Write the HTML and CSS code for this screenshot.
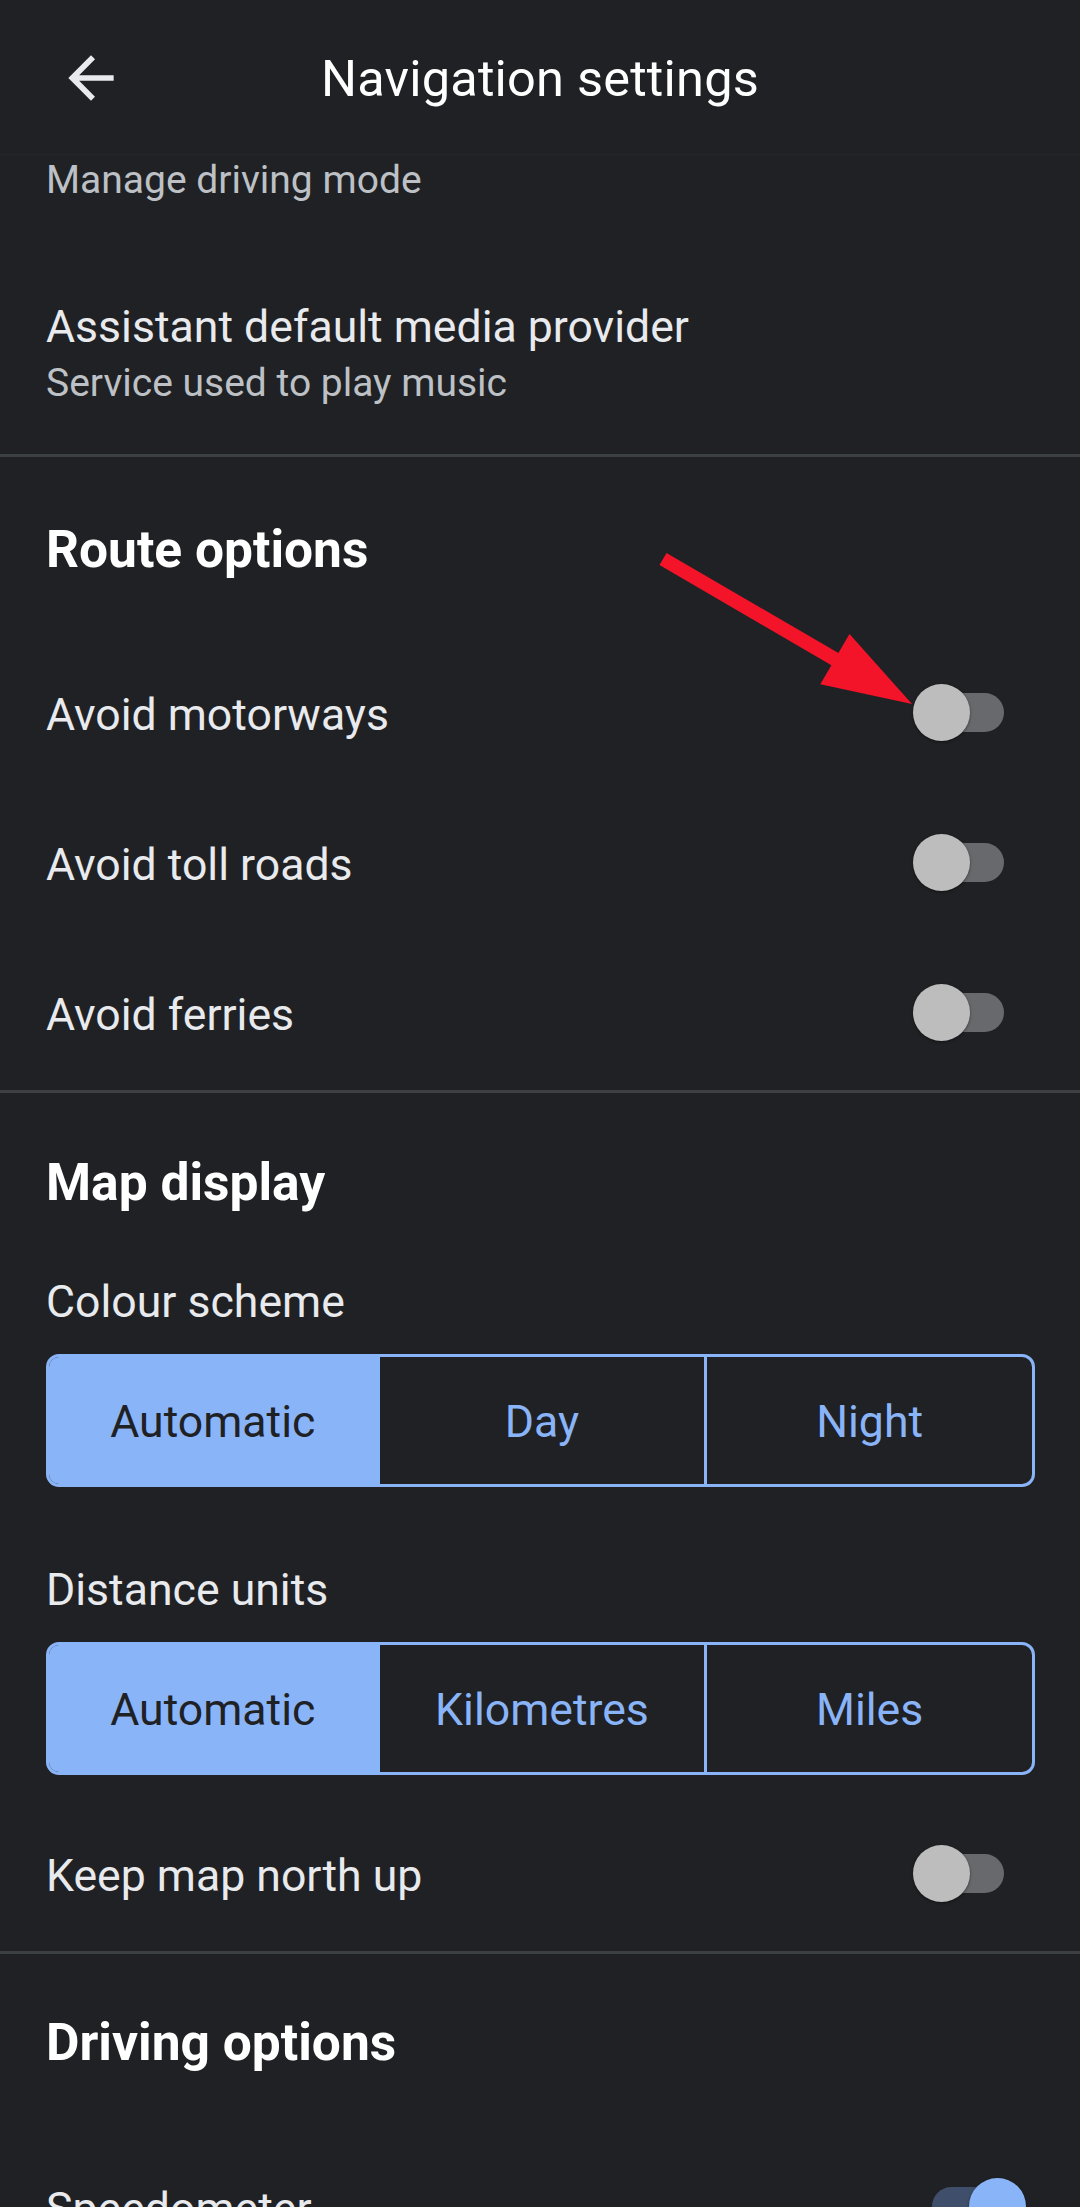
FILE: index.html
```html
<!DOCTYPE html>
<html lang="en">
<head>
<meta charset="utf-8">
<title>Navigation settings</title>
<link rel="stylesheet" href="styles.css">
</head>
<body>
<div class="screen">
  <header class="appbar">
    <button class="back" aria-label="Back">
      <svg viewBox="0 0 24 24" width="68" height="68"><path d="M20 11H7.83l5.59-5.59L12 4l-8 8 8 8 1.41-1.41L7.83 13H20v-2z" fill="#e8eaed"/></svg>
    </button>
    <h1 class="appbar-title">Navigation settings</h1>
    <span class="appbar-spacer"></span>
  </header>

  <main class="list">
    <div class="pref pref-partial">
      <p class="summary">Manage driving mode</p>
    </div>
    <div class="pref pref-two">
      <p class="title">Assistant default media provider</p>
      <p class="summary">Service used to play music</p>
    </div>

    <hr class="divider">

    <section class="group">
      <h2 class="group-title group-title-first">Route options</h2>
      <div class="pref switch-row">
        <span class="title">Avoid motorways</span>
        <span class="switch"><span class="track"></span><span class="thumb"></span></span>
      </div>
      <div class="pref switch-row">
        <span class="title">Avoid toll roads</span>
        <span class="switch"><span class="track"></span><span class="thumb"></span></span>
      </div>
      <div class="pref switch-row">
        <span class="title">Avoid ferries</span>
        <span class="switch"><span class="track"></span><span class="thumb"></span></span>
      </div>
    </section>

    <hr class="divider">

    <section class="group">
      <h2 class="group-title group-title-map">Map display</h2>
      <p class="label">Colour scheme</p>
      <div class="segmented">
        <span class="seg selected">Automatic</span>
        <span class="seg">Day</span>
        <span class="seg">Night</span>
      </div>
      <p class="label label-second">Distance units</p>
      <div class="segmented">
        <span class="seg selected">Automatic</span>
        <span class="seg">Kilometres</span>
        <span class="seg">Miles</span>
      </div>
      <div class="pref switch-row switch-row-after-seg">
        <span class="title">Keep map north up</span>
        <span class="switch"><span class="track"></span><span class="thumb"></span></span>
      </div>
    </section>

    <hr class="divider">

    <section class="group">
      <h2 class="group-title">Driving options</h2>
      <div class="pref switch-row">
        <span class="title">Speedometer</span>
        <span class="switch on"><span class="track"></span><span class="thumb"></span></span>
      </div>
    </section>
  </main>

  <svg class="annotation" width="1080" height="2207" viewBox="0 0 1080 2207" aria-hidden="true">
    <polygon points="666.5,553 838.4,653.1 849.5,634 912,704 820.3,684.2 831.4,665.2 659.5,565" fill="#f3142a"/>
  </svg>
</div>
</body>
</html>
```

FILE: styles.css
```css
* { box-sizing: border-box; }

html, body {
  margin: 0;
  padding: 0;
  background: #202124;
}

body {
  font-family: Roboto, "Liberation Sans", sans-serif;
  color: #e8eaed;
  width: 1080px;
  height: 2207px;
  overflow: hidden;
}

.screen {
  position: relative;
  width: 1080px;
  height: 2207px;
  overflow: hidden;
}

p, h1, h2 { margin: 0; }

/* App bar */
.appbar {
  height: 155px;
  display: grid;
  grid-template-columns: 1fr auto 1fr;
  align-items: center;
  border-bottom: 1px solid #252629;
  background: #202124;
}

.back {
  justify-self: start;
  margin-left: 57px;
  margin-top: 2px;
  width: 68px;
  height: 68px;
  padding: 0;
  border: 0;
  background: none;
  display: flex;
}

.appbar-title {
  font-size: 50.5px;
  font-weight: 400;
  line-height: 60px;
  padding-top: 4px;
  color: #ffffff;
  letter-spacing: 0.2px;
}

/* List */
.list {
  display: flex;
  flex-direction: column;
}

.pref { padding: 0 46px; }

.summary {
  font-size: 39px;
  line-height: 50px;
  color: #bdc1c6;
}

.title {
  font-size: 44.6px;
  line-height: 56px;
  color: #e8eaed;
}

.pref-partial {
  height: 50px;
}

.pref-two {
  padding-top: 94px;
  padding-bottom: 46px;
  display: flex;
  flex-direction: column;
  gap: 3px;
}

.divider {
  margin: 0;
  border: 0;
  height: 3px;
  background: #3c4043;
}

.group {
  display: flex;
  flex-direction: column;
}

.group-title {
  padding: 59px 46px 0;
  font-size: 51.5px;
  line-height: 60px;
  font-weight: 700;
  color: #ffffff;
  margin-bottom: 61px;
}

.group-title-first {
  padding-top: 63px;
  margin-bottom: 60px;
}

.group-title-map { padding-top: 60px; }

.switch-row {
  height: 150px;
  display: flex;
  align-items: center;
  justify-content: space-between;
  padding-right: 54px;
}

.switch-row-after-seg { margin-top: 26px; }

.switch {
  position: relative;
  width: 113px;
  height: 57px;
  margin-bottom: 6px;
}

.switch .track {
  position: absolute;
  left: 19px;
  right: 22px;
  top: 9px;
  height: 39px;
  border-radius: 20px;
  background: #68696c;
}

.switch .thumb {
  position: absolute;
  left: 0;
  top: 0;
  width: 57px;
  height: 57px;
  border-radius: 50%;
  background: #bdbdbd;
  box-shadow: 0 1px 3px rgba(0, 0, 0, 0.45);
}

.switch.on .track { background: #3f4e6a; }

.switch.on .thumb {
  left: auto;
  right: 0;
  background: #8ab4f8;
}

/* Labels + segmented buttons */
.label {
  padding: 0 46px;
  font-size: 44.6px;
  line-height: 56px;
  color: #e8eaed;
  margin-bottom: 24px;
}

.label-second { margin-top: 75px; }

.segmented {
  margin: 0 45px 0 46px;
  height: 133px;
  display: grid;
  grid-template-columns: 1fr 1fr 1fr;
  border: 3px solid #8ab4f8;
  border-radius: 13px;
  overflow: hidden;
}

.seg {
  display: flex;
  align-items: center;
  justify-content: center;
  font-size: 44.6px;
  color: #8ab4f8;
  padding-top: 2px;
}

.seg + .seg { border-left: 3px solid #8ab4f8; }

.seg.selected {
  background: #8ab4f8;
  color: #202124;
}

/* Annotation overlay */
.annotation {
  position: absolute;
  left: 0;
  top: 0;
  pointer-events: none;
}
```
